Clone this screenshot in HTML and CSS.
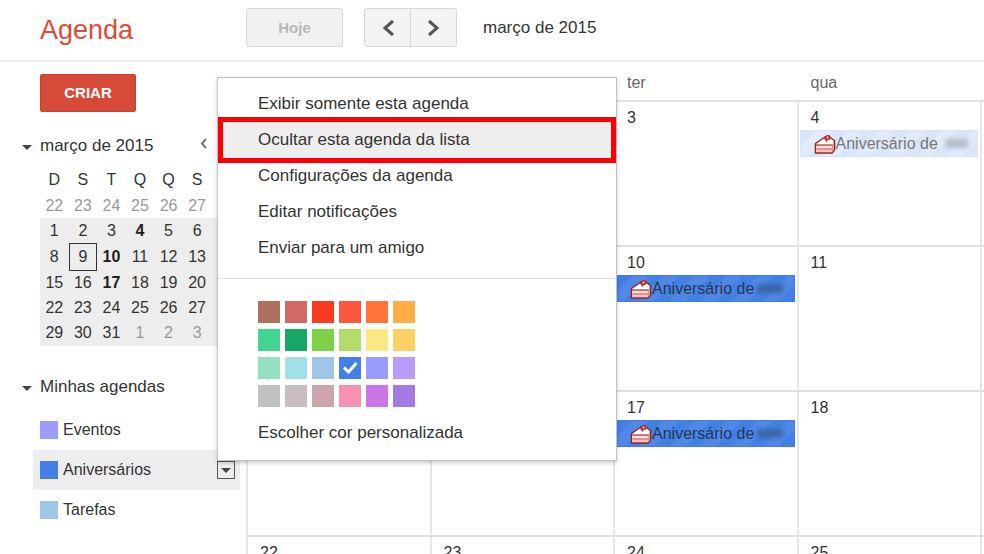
FILE: index.html
```html
<!DOCTYPE html>
<html lang="pt-BR">
<head>
<meta charset="utf-8">
<title>Agenda</title>
<link rel="stylesheet" href="styles.css">
</head>
<body>
<svg class="defs" width="0" height="0" aria-hidden="true">
  <symbol id="cake" viewBox="0 0 22 20">
    <path d="M1.500 9.500L11 3L14 2L20.500 6.500V16L18 19H1.500Z" fill="#fff" stroke="#8c2323" stroke-width="1.500" stroke-linejoin="round"/>
    <path d="M2.500 11H18V18H2.500Z" fill="#f6c1bd"/>
    <path d="M18 11L20 8V16L18 18Z" fill="#e59a96"/>
    <path d="M2 11H18.500" stroke="#a83434" stroke-width="1.200"/>
    <path d="M2.500 15H18.500" stroke="#d4615c" stroke-width="1"/>
    <path d="M2.500 13H18" stroke="#fff" stroke-width="1"/>
    <path d="M10 4.500L12.500 8L14 5.500L16 4.500L13.500 1Z" fill="#c62828"/>
    <circle cx="14" cy="3.500" r="2.500" fill="#c62828"/>
    <circle cx="13.500" cy="3.500" r="1" fill="#fff"/>
  </symbol>
</svg>
<header class="topbar">
  <h1 class="brand">Agenda</h1>
  <div class="toolbar">
    <button class="btn today" type="button" disabled>Hoje</button>
    <div class="pager">
      <button class="btn" type="button" aria-label="Anterior"><svg width="14" height="18" viewBox="0 0 14 18"><path d="M12 2L4 9L12 16"/></svg></button>
      <button class="btn" type="button" aria-label="Seguinte"><svg width="14" height="18" viewBox="0 0 14 18"><path d="M2 2L10 9L2 16"/></svg></button>
    </div>
    <span class="period">março de 2015</span>
  </div>
</header>
<div class="layout">
  <aside class="sidebar">
    <button class="create" type="button">CRIAR</button>
    <section>
      <div class="section-title">
        <span class="caret"></span>
        <h2>março de 2015</h2>
        <button class="mini-prev" type="button" aria-label="Mês anterior"><svg width="8" height="12" viewBox="0 0 8 12"><path d="M6 1L2 5.500L6 10"/></svg></button>
      </div>
      <table class="mini">
        <thead><tr><th>D</th><th>S</th><th>T</th><th>Q</th><th>Q</th><th>S</th><th></th></tr></thead>
        <tbody>
          <tr class="previous"><td>22</td><td>23</td><td>24</td><td>25</td><td>26</td><td>27</td><td></td></tr>
          <tr><td>1</td><td>2</td><td>3</td><td class="busy">4</td><td>5</td><td>6</td><td></td></tr>
          <tr><td>8</td><td class="current">9</td><td class="busy">10</td><td>11</td><td>12</td><td>13</td><td></td></tr>
          <tr><td>15</td><td>16</td><td class="busy">17</td><td>18</td><td>19</td><td>20</td><td></td></tr>
          <tr><td>22</td><td>23</td><td>24</td><td>25</td><td>26</td><td>27</td><td></td></tr>
          <tr><td>29</td><td>30</td><td>31</td><td class="next">1</td><td class="next">2</td><td class="next">3</td><td></td></tr>
        </tbody>
      </table>
    </section>
    <section class="agendas">
      <div class="section-title">
        <span class="caret"></span>
        <h2>Minhas agendas</h2>
      </div>
      <ul class="agenda-list">
        <li><span class="chip events"></span>Eventos</li>
        <li class="active"><span class="chip birthdays"></span>Aniversários
          <button class="options" type="button" aria-label="Opções da agenda"><span class="caret"></span></button>
          <div class="menu">
            <button class="menu-item" type="button">Exibir somente esta agenda</button>
            <button class="menu-item marked" type="button">Ocultar esta agenda da lista</button>
            <button class="menu-item" type="button">Configurações da agenda</button>
            <button class="menu-item" type="button">Editar notificações</button>
            <button class="menu-item" type="button">Enviar para um amigo</button>
            <hr>
            <div class="palette">
              <button class="c1" type="button"></button><button class="c2" type="button"></button><button class="c3" type="button"></button><button class="c4" type="button"></button><button class="c5" type="button"></button><button class="c6" type="button"></button>
              <button class="c7" type="button"></button><button class="c8" type="button"></button><button class="c9" type="button"></button><button class="c10" type="button"></button><button class="c11" type="button"></button><button class="c12" type="button"></button>
              <button class="c13" type="button"></button><button class="c14" type="button"></button><button class="c15" type="button"></button><button class="c16" type="button"><svg width="22" height="22" viewBox="0 0 22 22"><path d="M5 10.500L9.500 15L17.500 6"/></svg></button><button class="c17" type="button"></button><button class="c18" type="button"></button>
              <button class="c19" type="button"></button><button class="c20" type="button"></button><button class="c21" type="button"></button><button class="c22" type="button"></button><button class="c23" type="button"></button><button class="c24" type="button"></button>
            </div>
            <button class="menu-item" type="button">Escolher cor personalizada</button>
          </div>
        </li>
        <li><span class="chip tasks"></span>Tarefas</li>
      </ul>
    </section>
  </aside>
  <main class="month-area">
    <table class="month">
      <thead><tr><th></th><th></th><th>ter</th><th>qua</th><th class="rest"></th></tr></thead>
      <tbody>
        <tr>
          <td></td><td></td><td>3</td>
          <td>4<div class="event past"><svg class="cake" width="22" height="20"><use href="#cake"/></svg>Aniversário de<span class="smudge"></span></div></td>
          <td></td>
        </tr>
        <tr>
          <td></td><td></td>
          <td>10<div class="event"><svg class="cake" width="22" height="20"><use href="#cake"/></svg>Aniversário de<span class="smudge"></span></div></td>
          <td>11</td><td></td>
        </tr>
        <tr>
          <td></td><td></td>
          <td>17<div class="event"><svg class="cake" width="22" height="20"><use href="#cake"/></svg>Aniversário de<span class="smudge"></span></div></td>
          <td>18</td><td></td>
        </tr>
        <tr><td>22</td><td>23</td><td>24</td><td>25</td><td></td></tr>
      </tbody>
    </table>
  </main>
</div>
</body>
</html>
```
FILE: styles.css
```css
* { box-sizing: border-box; }
body {
  margin: 0;
  height: 100vh;
  overflow: hidden;
  background: #fff;
  color: #333;
  font: 17px/20px "Liberation Sans", Arial, sans-serif;
}
button {
  margin: 0;
  padding: 0;
  border: 0;
  background: none;
  color: inherit;
  font: inherit;
}
h1, h2 { margin: 0; font-weight: normal; }
svg { display: block; fill: none; }
.defs { position: absolute; }

.topbar {
  display: flex;
  align-items: center;
  height: 62px;
  padding: 0 0 5px 40px;
  border-bottom: 2px solid #f0f0f0;
}
.brand {
  width: 206px;
  padding-top: 4px;
  color: #dd4b39;
  font-size: 27px;
  line-height: 32px;
}
.toolbar { display: flex; align-items: center; }
.btn {
  display: flex;
  align-items: center;
  justify-content: center;
  width: 47px;
  height: 39px;
  border: 1px solid #d8d8d8;
  border-radius: 3px;
  background: #f3f3f3;
}
.btn svg { stroke: #555; stroke-width: 3; }
.today {
  width: 97px;
  background: #f1f1f1;
  color: #b8b8b8;
  font-size: 15px;
  font-weight: bold;
}
.pager { display: flex; margin: 0 26px 0 21px; }
.pager .btn:first-child { border-radius: 3px 0 0 3px; }
.pager .btn:last-child { margin-left: -1px; border-radius: 0 3px 3px 0; }

.layout { display: flex; }
.sidebar { flex: none; width: 240px; padding: 12px 0 0 40px; }
.create {
  display: block;
  width: 96px;
  height: 38px;
  border: 1px solid #cf4030;
  border-radius: 2px;
  background: #d84a38;
  color: #fff;
  font-size: 15px;
  font-weight: bold;
}
.section-title {
  display: flex;
  align-items: center;
  height: 20px;
  margin: 24px 0 10px -18px;
}
.section-title h2 { font-size: 17px; }
.caret {
  border: 5px solid transparent;
  border-top-color: #444;
  border-bottom: 0;
}
.section-title .caret { margin: 2px 8px 0 0; }
.mini-prev { margin: 0 0 4px 47px; }
.mini-prev svg { stroke: #777; stroke-width: 2; }
.mini {
  width: 200px;
  height: 180px;
  table-layout: fixed;
  border-collapse: separate;
  border-spacing: 0;
  font-size: 16px;
  line-height: 18px;
  text-align: center;
}
.mini th { height: 27px; }
.mini th, .mini td { padding: 0; font-weight: normal; }
.mini td { background: #ededed; }
.mini .previous td { background: none; color: #999; }
.mini .next { color: #999; }
.mini .busy { color: #222; font-weight: bold; }
.mini .current { border: 1px solid #333; }

.agendas .section-title { margin: 31px 0 13px -18px; }
.agenda-list { margin: 0 0 0 -7px; padding: 0; list-style: none; }
.agenda-list li {
  position: relative;
  display: flex;
  align-items: center;
  height: 40px;
  padding: 0 5px 0 7px;
  font-size: 16px;
}
.agenda-list .active { background: #ededed; }
.chip { width: 18px; height: 18px; margin-right: 5px; }
.events { background: #9a9cff; }
.birthdays { background: #4280e6; }
.tasks { background: #9fc6e7; }
.options {
  display: flex;
  align-items: center;
  justify-content: center;
  width: 18px;
  height: 18px;
  margin-left: auto;
  border: 1px solid #555;
}

.menu {
  position: absolute;
  z-index: 1;
  left: 184px;
  bottom: 29px;
  width: 400px;
  padding: 8px 0 9px;
  border: 1px solid #c2c2c2;
  background: #fff;
  box-shadow: 0 2px 4px rgba(0, 0, 0, .2);
  font-size: 17px;
}
.menu-item {
  position: relative;
  display: block;
  width: 100%;
  height: 36px;
  padding-left: 40px;
  text-align: left;
}
.marked { background: #eee; }
.marked::after {
  content: "";
  position: absolute;
  inset: -5px 0;
  border: 5px solid #f00;
}
.menu hr {
  height: 1px;
  margin: 12px 0 22px;
  border: 0;
  background: #e3e3e3;
}
.palette {
  display: grid;
  grid-template-columns: repeat(6, 22px);
  grid-auto-rows: 22px;
  gap: 6px 5px;
  margin: 0 0 8px 40px;
}
.palette svg { stroke: #fff; stroke-width: 3; }
.c1 { background: #ac725e; }
.c2 { background: #d06b64; }
.c3 { background: #f83a22; }
.c4 { background: #fa573c; }
.c5 { background: #ff7537; }
.c6 { background: #ffad46; }
.c7 { background: #42d692; }
.c8 { background: #16a765; }
.c9 { background: #7bd148; }
.c10 { background: #b3dc6c; }
.c11 { background: #fbe983; }
.c12 { background: #fad165; }
.c13 { background: #92e1c0; }
.c14 { background: #9fe1e7; }
.c15 { background: #9fc6e7; }
.c16 { background: #4280e6; }
.c17 { background: #9a9cff; }
.c18 { background: #b99aff; }
.c19 { background: #c2c2c2; }
.c20 { background: #cabdbf; }
.c21 { background: #cca6ac; }
.c22 { background: #f691b2; }
.c23 { background: #cd74e6; }
.c24 { background: #a47ae2; }

.month-area { flex: 1; margin-left: 6px; }
.month {
  width: 100%;
  table-layout: fixed;
  border-collapse: separate;
  border-spacing: 0;
  font-size: 16px;
}
.month th {
  height: 40px;
  padding: 4px 0 0 14px;
  border-bottom: 2px solid #e0e0e0;
  color: #666;
  font-weight: normal;
  text-align: left;
}
.month .rest { width: 4px; padding: 0; }
.month td {
  height: 145px;
  padding: 6px 2px 0 1px;
  border-left: 2px solid #e6e6e6;
  border-bottom: 2px solid #e0e0e0;
  text-indent: 11px;
  vertical-align: top;
}
.month td:last-child { padding: 0; }
.event {
  display: flex;
  align-items: center;
  height: 27px;
  margin-top: 2px;
  padding-left: 13px;
  border: 1px solid #3f7ce4;
  background: repeating-linear-gradient(135deg, #4280e6 0 11px, #5088e9 11px 22px);
  color: #27364d;
  text-indent: 0;
  white-space: nowrap;
}
.past {
  border-color: #d9e6fa;
  background: repeating-linear-gradient(135deg, #d9e6fa 0 11px, #e1ebfb 11px 22px);
  color: #777;
}
.smudge {
  width: 26px;
  height: 9px;
  margin-left: 3px;
  background: #3d66a6;
  filter: blur(2px);
}
.past .smudge { width: 22px; margin-left: 8px; background: #b5bdca; }
```
